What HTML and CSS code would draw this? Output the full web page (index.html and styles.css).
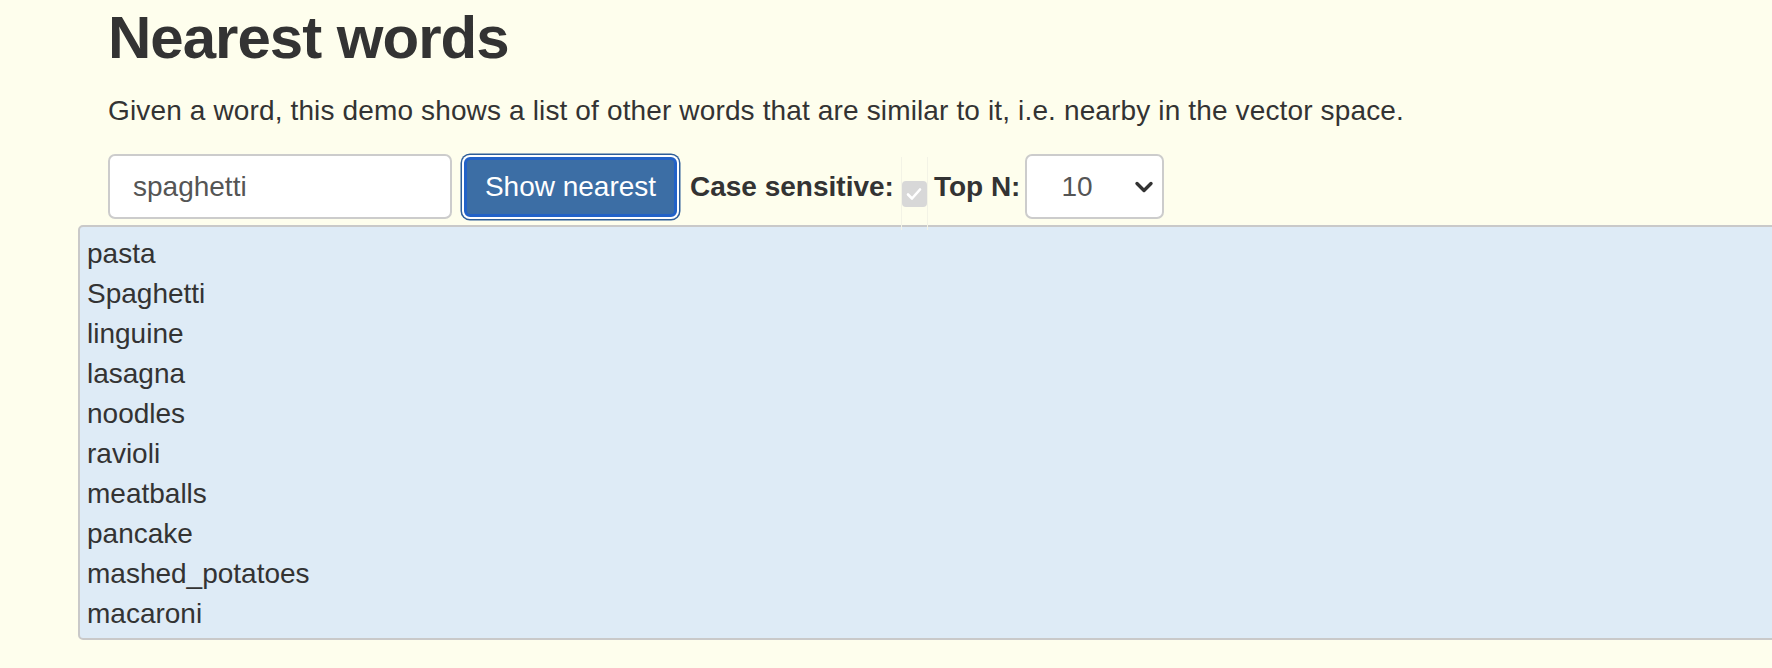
FILE: index.html
```html
<!DOCTYPE html>
<html lang="en">
<head>
<meta charset="utf-8">
<title>Nearest words</title>
<link rel="stylesheet" href="styles.css">
</head>
<body>
<div class="container">
  <h1 class="title">Nearest words</h1>
  <p class="intro">Given a word, this demo shows a list of other words that are similar to it, i.e. nearby in the vector space.</p>
  <form class="query">
    <input class="word-input" type="text" value="spaghetti">
    <button class="btn-primary" type="button">Show nearest</button>
    <span class="label">Case sensitive:</span>
    <span class="check-wrap">
      <span class="checkbox">
        <svg width="18" height="16" viewBox="0 0 18 16"><path d="M3 8.5 L7 12.5 L15 3.5" fill="none" stroke="#ffffff" stroke-width="2.6" stroke-linecap="round" stroke-linejoin="round"/></svg>
      </span>
    </span>
    <span class="label">Top N:</span>
    <div class="select">
      <span class="select-value">10</span>
      <svg class="chevron" width="20" height="14" viewBox="0 0 20 14"><path d="M3 3.5 L10 10.5 L17 3.5" fill="none" stroke="#333333" stroke-width="3.4" stroke-linecap="round" stroke-linejoin="round"/></svg>
    </div>
  </form>
  <div class="results">
    <div class="row">pasta</div>
    <div class="row">Spaghetti</div>
    <div class="row">linguine</div>
    <div class="row">lasagna</div>
    <div class="row">noodles</div>
    <div class="row">ravioli</div>
    <div class="row">meatballs</div>
    <div class="row">pancake</div>
    <div class="row">mashed_potatoes</div>
    <div class="row">macaroni</div>
  </div>
</div>
</body>
</html>
```

FILE: styles.css
```css
html {
  overflow-x: hidden;
}
body {
  margin: 0;
  background: #fefeed;
  color: #333333;
  font-family: "Liberation Sans", Arial, Helvetica, sans-serif;
  font-size: 28px;
}
.container {
  padding-left: 108px;
}
.title {
  margin: 5px 0 20px;
  font-size: 60px;
  line-height: 66px;
  font-weight: bold;
  letter-spacing: -1px;
  color: #333333;
}
.intro {
  margin: 0 0 23px;
  line-height: 40px;
  letter-spacing: 0.14px;
}
.query {
  display: flex;
  align-items: center;
  height: 65px;
  margin: 0;
}
.word-input {
  box-sizing: border-box;
  width: 344px;
  height: 65px;
  border: 2px solid #cccccc;
  border-radius: 7px;
  background: #ffffff;
  padding: 0 0 0 23px;
  font-family: inherit;
  font-size: 28px;
  color: #555555;
  outline: none;
}
.btn-primary {
  box-sizing: border-box;
  width: 213px;
  height: 60px;
  margin-left: 12px;
  border: 3px solid #2262c7;
  border-radius: 6px;
  background: #3c6ea5;
  color: #ffffff;
  font-family: inherit;
  font-size: 28px;
  padding: 0;
  box-shadow: 0 0 0 2px #ffffff, 0 0 0 3.5px #2d5d98;
}
.label {
  font-weight: bold;
  white-space: nowrap;
}
.btn-primary + .label {
  margin-left: 13px;
}
.check-wrap {
  display: flex;
  align-items: center;
  height: 73px;
  margin: 3px 6px 0 7px;
  border-left: 1px solid #f3f3e6;
  border-right: 1px solid #f3f3e6;
  align-self: flex-start;
}
.checkbox {
  display: flex;
  align-items: center;
  justify-content: center;
  width: 25px;
  height: 26px;
  border-radius: 4px;
  background: #d8d8d8;
}
.select {
  box-sizing: border-box;
  display: flex;
  align-items: center;
  justify-content: space-between;
  width: 139px;
  height: 65px;
  margin-left: 5px;
  padding: 0 8px 0 34px;
  border: 2px solid #cccccc;
  border-radius: 7px;
  background: #ffffff;
  color: #555555;
}
.results {
  margin: 6px 0 0 -30px;
  width: calc(100% + 200px);
  border: 2px solid #c9c9c9;
  border-radius: 5px;
  background: #deebf6;
  padding: 7px 8px 4px 7px;
}
.row {
  line-height: 40px;
}
```
